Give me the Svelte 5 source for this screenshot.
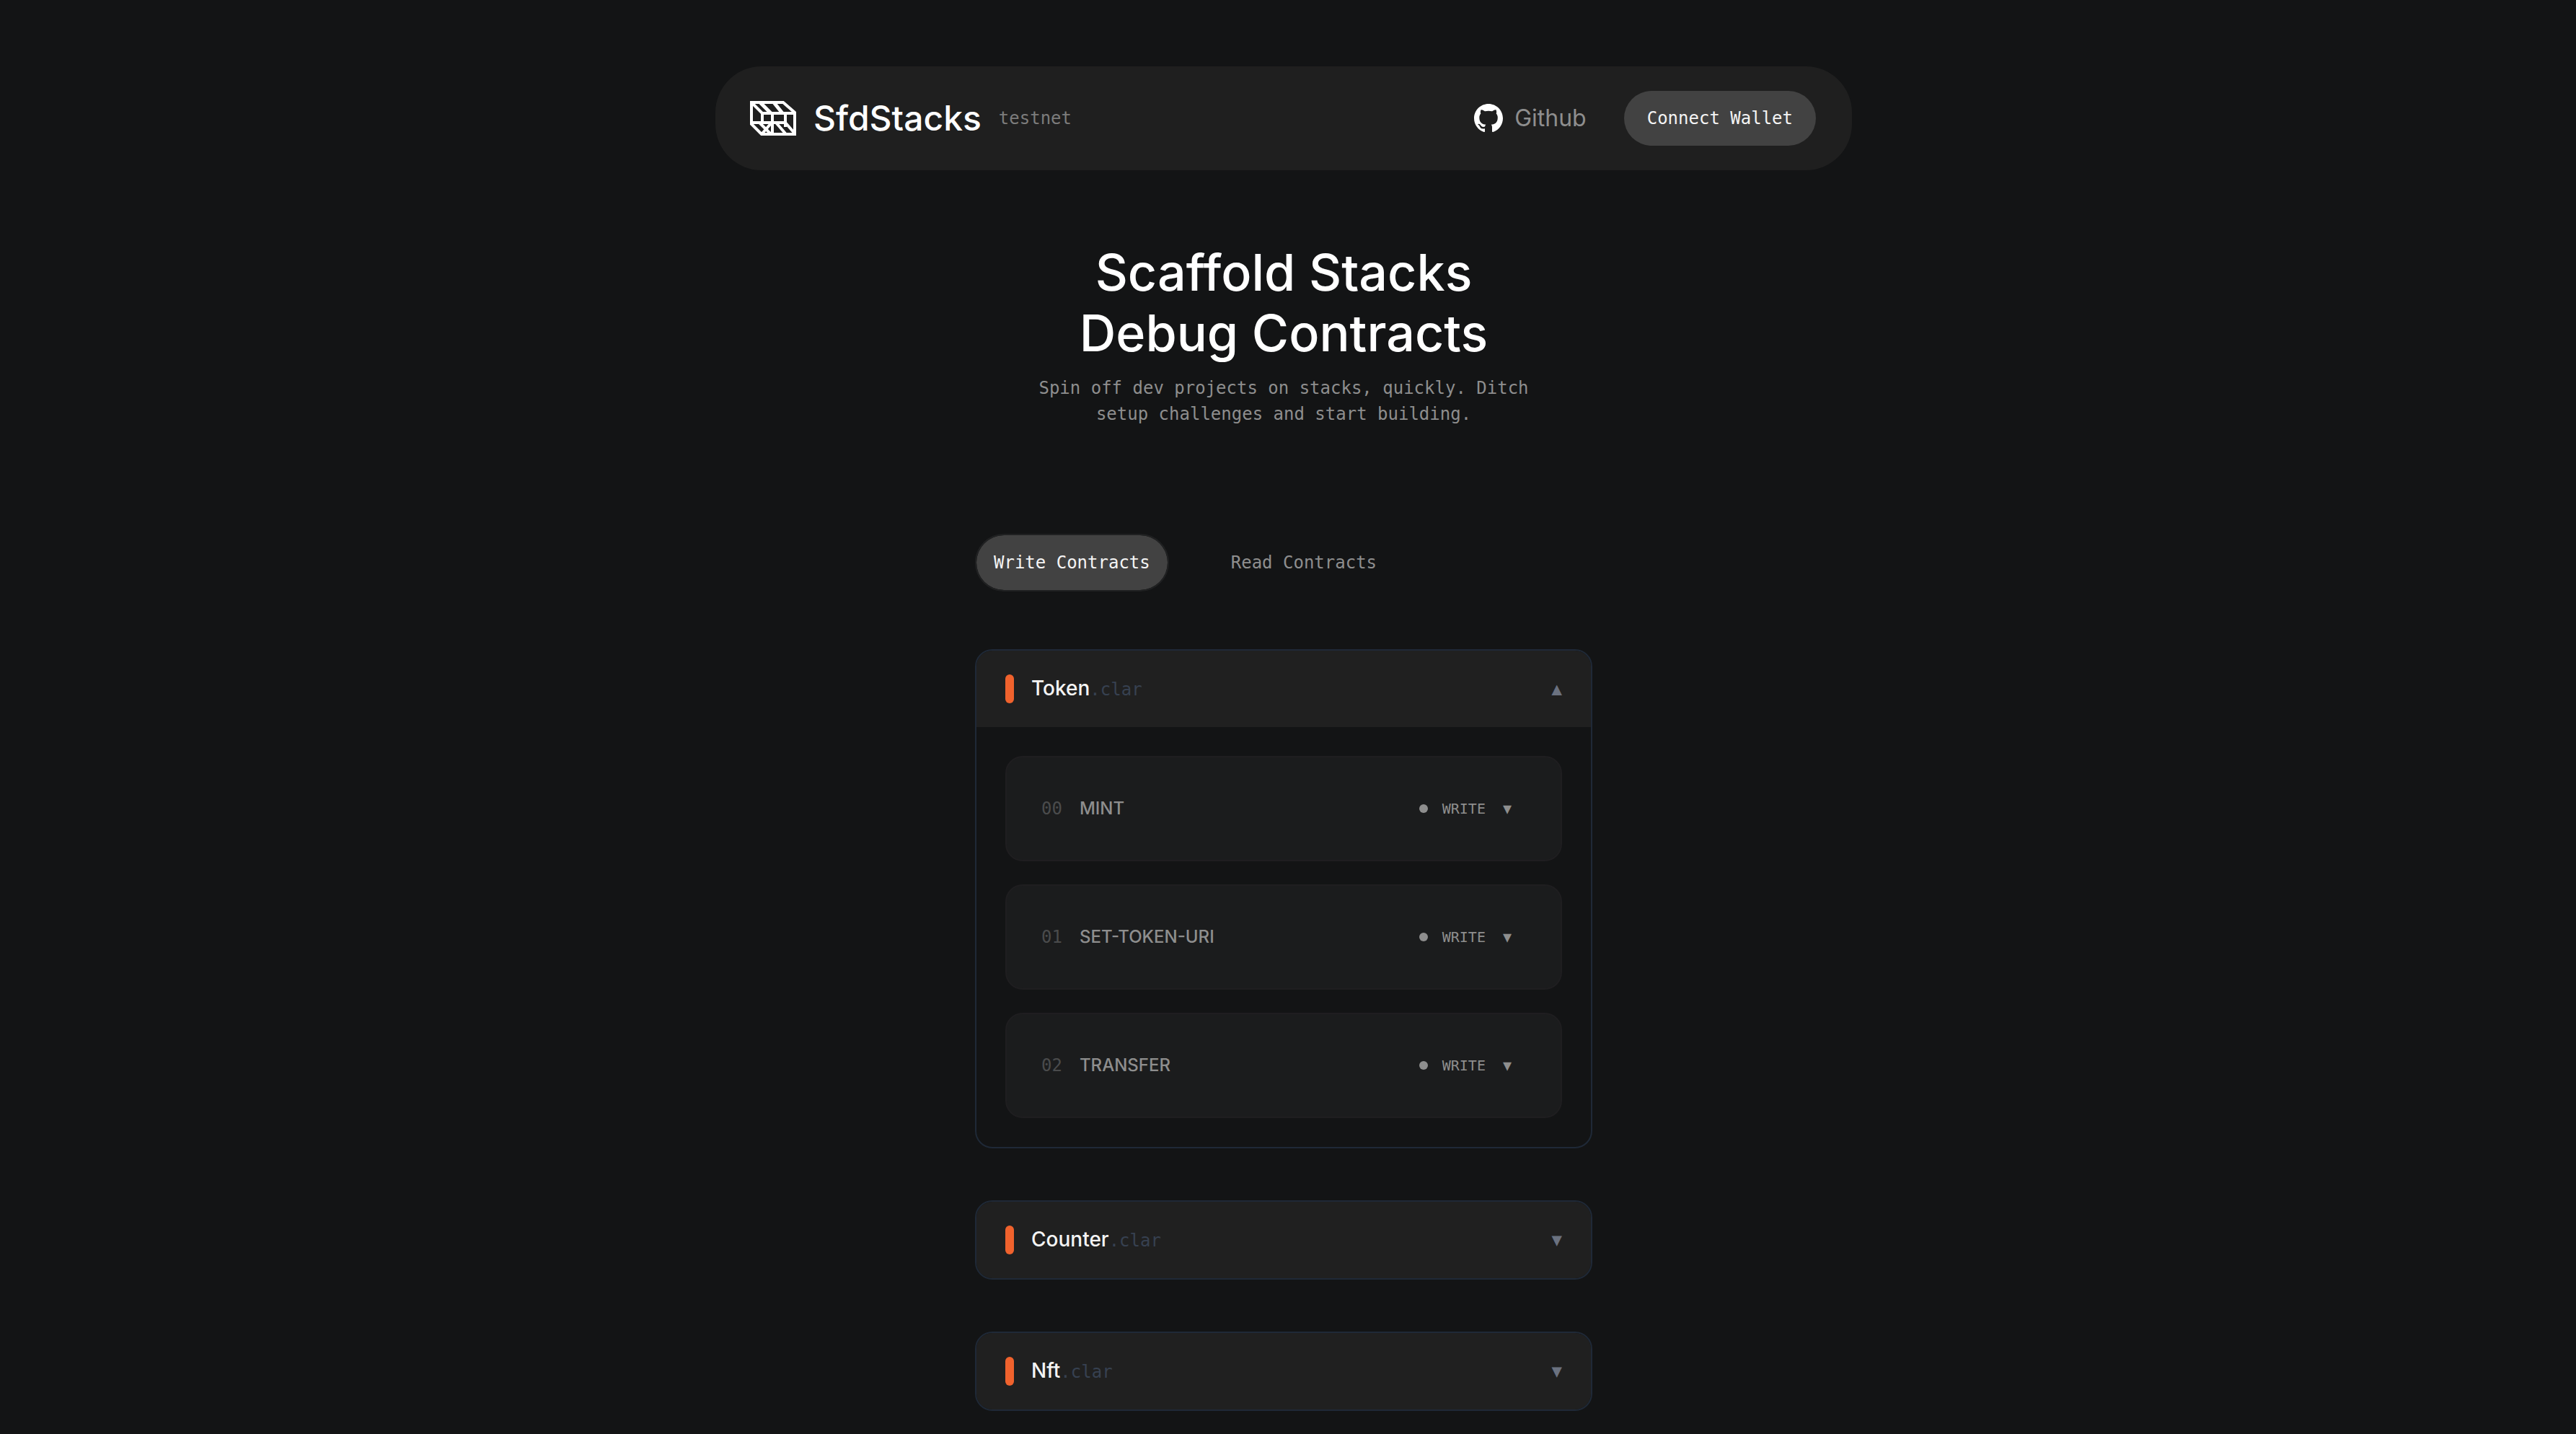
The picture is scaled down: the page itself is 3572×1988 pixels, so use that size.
<script>

    let contracts = [
        { name: 'Token', open: true, functions: ['MINT', 'SET-TOKEN-URI', 'TRANSFER'] },
        { name: 'Counter', open: false, functions: [] },
        { name: 'Nft', open: false, functions: [] }
    ]

    let tab = 'write'

    const toggle = ndx => {
        contracts[ndx].open = !contracts[ndx].open
    }

    const pad = n => String(n).padStart(2, '0')

</script>

<div class='page'>
    <header>
        <a class='brand' href='#home'>
            <svg width='64' height='48' viewBox='0 0 64 48' fill='none' stroke='#fff' stroke-width='4'>
                <path d='M2 2H46L62 16V46H16L2 32Z' />
                <path d='M3 3L17 17H62M17 17V31' />
                <path d='M14 2L29 17M33 2L45 17' stroke-width='5' />
                <path d='M2 30H49V16M31 16V45M49 30L62 45' />
                <path d='M13 30L28 45M30 30L17 45M36 30L49 45M49 30V36' />
            </svg>
            <span class='name'>SfdStacks</span>
            <span class='network'>testnet</span>
        </a>
        <nav>
            <a class='github' href='#github'>
                <svg width='40' height='40' viewBox='0 0 16 16' fill='#fff'>
                    <path d='M8 0C3.58 0 0 3.58 0 8c0 3.54 2.29 6.53 5.47 7.59.4.07.55-.17.55-.38 0-.19-.01-.82-.01-1.49-2.01.37-2.53-.49-2.69-.94-.09-.23-.48-.94-.82-1.13-.28-.15-.68-.52-.01-.53.63-.01 1.08.58 1.23.82.72 1.21 1.87.87 2.33.66.07-.52.28-.87.51-1.07-1.78-.2-3.64-.89-3.64-3.95 0-.87.31-1.59.82-2.15-.08-.2-.36-1.02.08-2.12 0 0 .67-.21 2.2.82.64-.18 1.32-.27 2-.27s1.36.09 2 .27c1.53-1.04 2.2-.82 2.2-.82.44 1.1.16 1.92.08 2.12.51.56.82 1.27.82 2.15 0 3.07-1.87 3.75-3.65 3.95.29.25.54.73.54 1.48 0 1.07-.01 1.93-.01 2.2 0 .21.15.46.55.38A8.01 8.01 0 0 0 16 8c0-4.42-3.58-8-8-8z' />
                </svg>
                Github
            </a>
            <button class='pill'>Connect Wallet</button>
        </nav>
    </header>

    <main>
        <h1>Scaffold Stacks<br />Debug Contracts</h1>
        <p class='lead'>Spin off dev projects on stacks, quickly. Ditch setup challenges and start building.</p>

        <div class='tabs'>
            <button class:active={tab === 'write'} on:click={() => tab = 'write'}>Write Contracts</button>
            <button class:active={tab === 'read'} on:click={() => tab = 'read'}>Read Contracts</button>
        </div>

        <div class='contracts'>
            {#each contracts as contract, ndx}
                <section>
                    <button class='title' aria-expanded={contract.open} on:click={() => toggle(ndx)}>
                        <span class='bar'></span>
                        <span class='file'>{contract.name}<span class='ext'>.clar</span></span>
                        <span class='arrow'>{contract.open ? '▲' : '▼'}</span>
                    </button>
                    {#if contract.open}
                        <div class='functions'>
                            {#each contract.functions as fn, i}
                                <button class='fn'>
                                    <span class='index'>{pad(i)}</span>
                                    <span class='label'>{fn}</span>
                                    <span class='kind'>
                                        <span class='dot'></span>
                                        <span class='mode'>WRITE</span>
                                        <span>▼</span>
                                    </span>
                                </button>
                            {/each}
                        </div>
                    {/if}
                </section>
            {/each}
        </div>
    </main>
</div>

<style>

    :global(body) {
        margin: 0;
        background: #131415;
    }

    .page {
        box-sizing: border-box;
        min-height: 100vh;
        padding: 92px 36px 32px 24px;
        font-family: 'DejaVu Sans Mono', monospace;
        font-size: 24px;
        color: #8e8e8e;
    }

    button {
        margin: 0;
        border: 0;
        background: none;
        font: inherit;
        color: inherit;
        cursor: pointer;
    }

    a {
        color: inherit;
        text-decoration: none;
    }

    header {
        box-sizing: border-box;
        max-width: 1576px;
        height: 144px;
        margin: 0 auto;
        padding: 0 50px 0 48px;
        display: flex;
        align-items: center;
        justify-content: space-between;
        border-radius: 64px;
        background: #1f1f1f;
    }

    .brand, nav, .github {
        display: flex;
        align-items: center;
    }

    .brand {
        gap: 24px;
    }

    .name {
        font: 500 48px/60px Inter, sans-serif;
        color: #fff;
    }

    .network {
        color: #7c7c7c;
    }

    nav {
        gap: 52px;
    }

    .github {
        gap: 16px;
        font: 32px/40px Inter, sans-serif;
    }

    .pill {
        height: 76px;
        padding: 0 32px;
        border-radius: 40px;
        background: #424242;
        color: #f4f4f4;
    }

    main {
        max-width: 856px;
        margin: 0 auto;
    }

    h1 {
        margin: 100px 0 0;
        font: 500 70px/84px Inter, sans-serif;
        text-align: center;
        color: #fff;
    }

    .lead {
        max-width: 720px;
        margin: 16px auto 0;
        line-height: 36px;
        text-align: center;
    }

    .tabs {
        display: flex;
        gap: 60px;
        margin-top: 148px;
    }

    .tabs button {
        height: 80px;
        padding: 0 24px;
        border: 2px solid transparent;
        border-radius: 40px;
    }

    .tabs .active {
        border-color: #202122;
        background: #424242;
        background-clip: padding-box;
        color: #f4f4f4;
    }

    .contracts {
        display: flex;
        flex-direction: column;
        gap: 72px;
        margin-top: 80px;
    }

    section {
        overflow: hidden;
        border: 2px solid #1f2937;
        border-radius: 24px;
    }

    .title {
        width: 100%;
        height: 106px;
        padding: 0 40px;
        display: flex;
        align-items: center;
        gap: 24px;
        background: #202020;
    }

    .bar {
        width: 12px;
        height: 40px;
        border-radius: 6px;
        background: #f0622d;
    }

    .file {
        font: 500 28px/40px Inter, sans-serif;
        color: #f4f4f4;
    }

    .ext {
        font: 24px/40px 'DejaVu Sans Mono', monospace;
        color: #374151;
    }

    .arrow {
        margin-left: auto;
        color: #6b7280;
    }

    .functions {
        display: flex;
        flex-direction: column;
        gap: 32px;
        padding: 40px;
    }

    .fn {
        height: 146px;
        padding: 0 68px 0 48px;
        display: flex;
        align-items: center;
        gap: 24px;
        border: 2px solid #1f1e20;
        border-radius: 24px;
        background: #1b1c1d;
    }

    .index {
        color: #4a4b4c;
    }

    .label {
        font: 500 24px/32px Inter, sans-serif;
    }

    .kind {
        margin-left: auto;
        display: flex;
        align-items: center;
        gap: 20px;
        font-size: 20px;
    }

    .dot {
        width: 12px;
        height: 12px;
        border-radius: 50%;
        background: #8e8e8e;
    }

    .mode {
        margin-right: 4px;
    }

</style>
